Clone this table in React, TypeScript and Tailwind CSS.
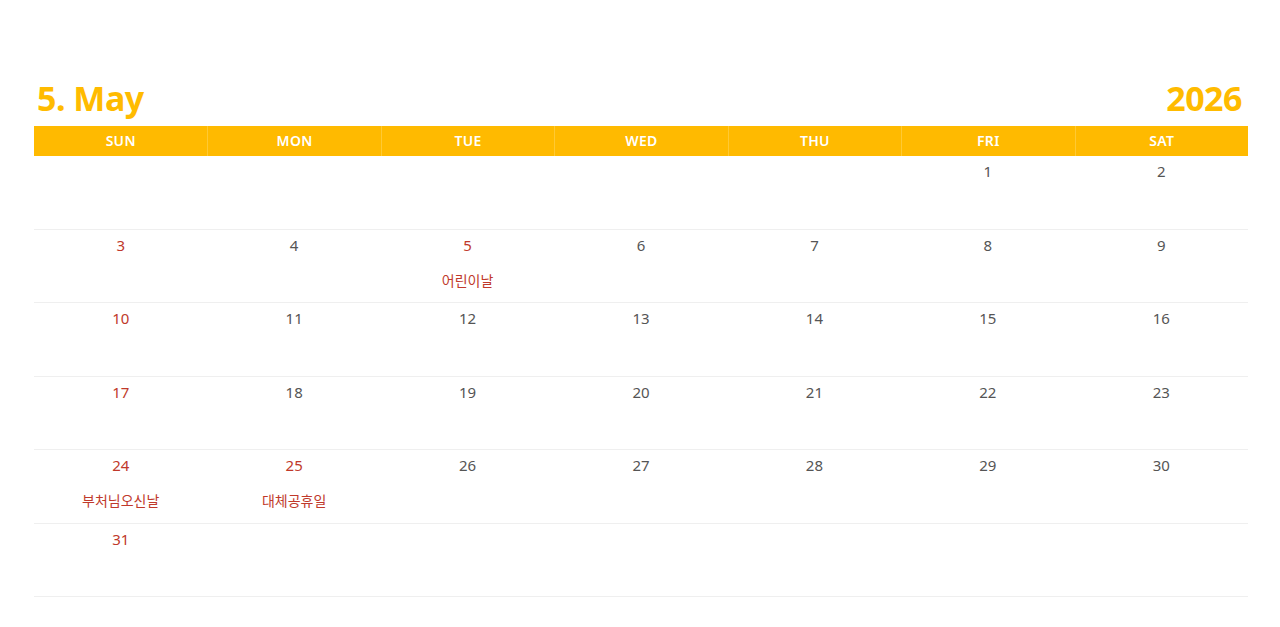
const DAYS = ["SUN", "MON", "TUE", "WED", "THU", "FRI", "SAT"];

type Cell = { day?: number; holiday?: string; red?: boolean };

const HOLIDAYS: Record<number, string> = {
  5: "어린이날",
  24: "부처님오신날",
  25: "대체공휴일",
};

function buildWeeks(): Cell[][] {
  const cells: Cell[] = [];
  const startOffset = 5; // May 1, 2026 is a Friday
  for (let i = 0; i < startOffset; i++) cells.push({});
  for (let d = 1; d <= 31; d++) {
    const col = cells.length % 7;
    cells.push({ day: d, holiday: HOLIDAYS[d], red: col === 0 || !!HOLIDAYS[d] });
  }
  while (cells.length % 7) cells.push({});
  const weeks: Cell[][] = [];
  for (let i = 0; i < cells.length; i += 7) weeks.push(cells.slice(i, i + 7));
  return weeks;
}

export default function App() {
  const weeks = buildWeeks();
  return (
    <div
      className="min-h-[627px] w-[1280px] bg-white pt-[78px] pl-[34px] pr-[32px]"
      style={{ fontFamily: '"Noto Sans", "Noto Sans CJK KR", sans-serif' }}
    >
      {/* Title */}
      <div className="flex items-end justify-between pl-[3px] pr-[6px] pb-[8px] h-[48px]">
        <h1 className="text-[34px] font-bold leading-[40px] text-[#ffbb00] tracking-[-0.5px]">5. May</h1>
        <span className="text-[34px] font-bold leading-[40px] text-[#ffbb00] tracking-[-0.5px]">2026</span>
      </div>

      {/* Weekday header */}
      <div className="grid grid-cols-7 bg-[#ffba00] h-[30px]">
        {DAYS.map((d, i) => (
          <div
            key={d}
            className={`flex items-center justify-center pb-[1px] text-[14px] font-semibold text-white tracking-[0.3px] ${
              i > 0 ? "border-l border-[#ffc933]" : ""
            }`}
          >
            {d}
          </div>
        ))}
      </div>

      {/* Weeks */}
      {weeks.map((week, wi) => (
        <div key={wi} className="grid grid-cols-7 h-[73.5px] border-b border-[#efefef]">
          {week.map((c, ci) => (
            <div key={ci} className="flex flex-col items-center pt-[5px]">
              {c.day ? (
                <span className={`text-[15px] leading-[20px] ${c.red ? "text-[#c0392b]" : "text-[#555555]"}`}>
                  {c.day}
                </span>
              ) : null}
              {c.holiday ? (
                <span className="mt-[16px] text-[14px] leading-[20px] text-[#c0392b]">{c.holiday}</span>
              ) : null}
            </div>
          ))}
        </div>
      ))}
    </div>
  );
}
